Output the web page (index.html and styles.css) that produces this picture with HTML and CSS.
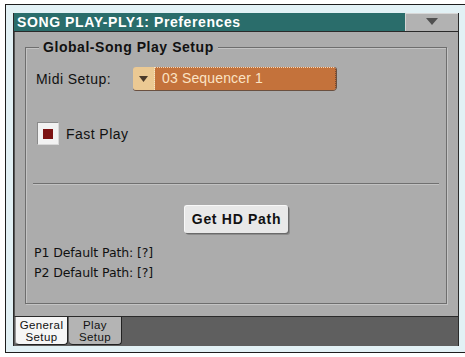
FILE: index.html
```html
<!DOCTYPE html>
<html>
<head>
<meta charset="utf-8">
<link rel="stylesheet" href="styles.css">
</head>
<body>
<div class="frame">
  <div class="window">
    <div class="titlebar">
      <div class="title">SONG PLAY-PLY1: Preferences</div>
      <div class="menu-btn"><svg width="12" height="7" viewBox="0 0 12 7"><path d="M0 0 L12 0 L6 7 Z" fill="#505050"/></svg></div>
    </div>
    <div class="panel">
      <div class="group">
        <div class="legend">Global-Song Play Setup</div>
        <div class="row midi">
          <span class="label">Midi Setup:</span>
          <div class="dropdown">
            <div class="dd-arrow"><svg width="9" height="6" viewBox="0 0 9 6"><path d="M0 0 L9 0 L4.5 6 Z" fill="#4a3a2a"/></svg></div>
            <div class="dd-value">03 Sequencer 1</div>
          </div>
        </div>
        <div class="row fast">
          <div class="check"><div class="check-mark"></div></div>
          <span class="label">Fast Play</span>
        </div>
        <div class="sep"></div>
        <div class="btn-row"><div class="btn">Get HD Path</div></div>
        <div class="path">P1 Default Path: [?]</div>
        <div class="path">P2 Default Path: [?]</div>
      </div>
    </div>
    <div class="tabs">
      <div class="tab tab-general">General<br>Setup</div>
      <div class="tab tab-play">Play<br>Setup</div>
    </div>
  </div>
</div>
</body>
</html>
```
FILE: styles.css
```css
html, body {
  margin: 0;
  padding: 0;
  background: #ffffff;
  overflow: hidden;
}
body {
  width: 465px;
  height: 357px;
  font-family: "Liberation Sans", Arial, sans-serif;
}
.frame {
  margin: 4px 0 0 5px;
  border-top: 1px solid #1e1e1e;
  border-left: 1px solid #1e1e1e;
  border-bottom: 1px solid #1e1e1e;
  background: #e2f1f5;
  padding: 8px 0 6px 7px;
}
.window {
  width: 444px;
  border-left: 1px solid #2a2a2a;
  border-right: 1px solid #2a2a2a;
  background: #acacac;
}
.titlebar {
  display: flex;
  height: 18px;
  border-bottom: 1px solid #2a2a2a;
}
.title {
  flex: 1;
  background: #2a6d6b;
  color: #ffffff;
  font-weight: bold;
  font-size: 14px;
  letter-spacing: 0.6px;
  line-height: 18px;
  padding-left: 3px;
  white-space: nowrap;
}
.menu-btn {
  width: 53px;
  background: #b2b2b2;
  border-top: 1px solid #d8d8d8;
  border-left: 1px solid #d4d4d4;
  box-sizing: border-box;
  display: flex;
  justify-content: center;
  align-items: center;
  padding-bottom: 2px;
}
.panel {
  border-left: 1px solid #555;
  border-bottom: 1px solid #2a2a2a;
  padding: 15px 11px 0 10px;
  box-sizing: border-box;
  height: 285px;
}
.group {
  border: 1px solid #6e6e6e;
  box-shadow: inset 1px 1px 0 #c4c4c4, 1px 1px 0 #c4c4c4;
  height: 257px;
  box-sizing: border-box;
  font-size: 14px;
  color: #111;
}
.legend {
  display: block;
  width: max-content;
  margin: -9px 0 0 13px;
  padding: 0 4px;
  background: #acacac;
  font-weight: bold;
  font-size: 14px;
  letter-spacing: 0.55px;
  line-height: 16px;
  color: #111;
}
.row {
  display: flex;
  align-items: center;
}
.midi {
  margin-top: 12px;
  padding-left: 10px;
}
.label {
  letter-spacing: 0.45px;
}
.midi .label {
  width: 97px;
}
.dropdown {
  display: flex;
  width: 203px;
  height: 23px;
  border-radius: 3px;
  box-shadow: 0 1px 0 #6a5040, 1px 0 0 #6a5040;
  overflow: hidden;
}
.dd-arrow {
  width: 21px;
  background: #ebc993;
  border-right: 1px dotted #f7e6c8;
  display: flex;
  justify-content: center;
  align-items: center;
}
.dd-value {
  flex: 1;
  background: #c4723b;
  color: #fbe3c4;
  padding-left: 7px;
  border-top: 1px dotted #f3d8b8;
  border-right: 1px dotted #7a4a30;
  box-sizing: border-box;
  line-height: 21px;
  letter-spacing: 0.15px;
}
.fast {
  margin-top: 32px;
  padding-left: 11px;
}
.check {
  width: 20px;
  height: 21px;
  background: #f2f2f2;
  border-top: 1px solid #8a8a8a;
  border-left: 1px solid #8a8a8a;
  border-right: 1px solid #d8d8d8;
  border-bottom: 1px solid #d8d8d8;
  display: flex;
  justify-content: center;
  align-items: center;
  margin-right: 7px;
}
.check-mark {
  width: 10px;
  height: 10px;
  background: #7c1212;
}
.sep {
  margin: 38px 7px 0 7px;
  height: 1px;
  background: #707070;
  border-bottom: 1px solid #c2c2c2;
}
.btn-row {
  display: flex;
  justify-content: center;
  margin-top: 20px;
}
.btn {
  width: 104px;
  height: 28px;
  box-sizing: border-box;
  background: #e8e8e8;
  border-radius: 3px;
  border-top: 1px solid #f8f8f8;
  border-left: 1px solid #f8f8f8;
  box-shadow: 1px 1px 0 #6a6a6a, 2px 2px 0 #8c8c8c;
  font-weight: bold;
  font-size: 14px;
  letter-spacing: 0.7px;
  text-align: center;
  line-height: 26px;
  color: #111;
}
.path {
  font-family: "DejaVu Sans", Verdana, sans-serif;
  font-size: 12.5px;
  line-height: 20px;
  padding-left: 8px;
  letter-spacing: -0.1px;
  color: #111;
}
.btn-row + .path {
  margin-top: 10px;
}
.tabs {
  height: 29px;
  background: #5f5f5f;
  display: flex;
  align-items: flex-start;
  padding-left: 1px;
}
.tab {
  height: 28px;
  box-sizing: border-box;
  width: 53px;
  font-size: 11.5px;
  line-height: 12px;
  text-align: center;
  padding-top: 2px;
  letter-spacing: 0.4px;
  color: #111;
  border-radius: 0 0 4px 4px;
}
.tab-general {
  background: #f6f6f6;
  border-bottom: 1px solid #222;
  border-right: 1px solid #222;
  border-left: 1px solid #999;
}
.tab-play {
  margin-left: 1px;
  background: #b4b4b4;
  border-bottom: 1px solid #222;
  border-right: 1px solid #222;
}
```
